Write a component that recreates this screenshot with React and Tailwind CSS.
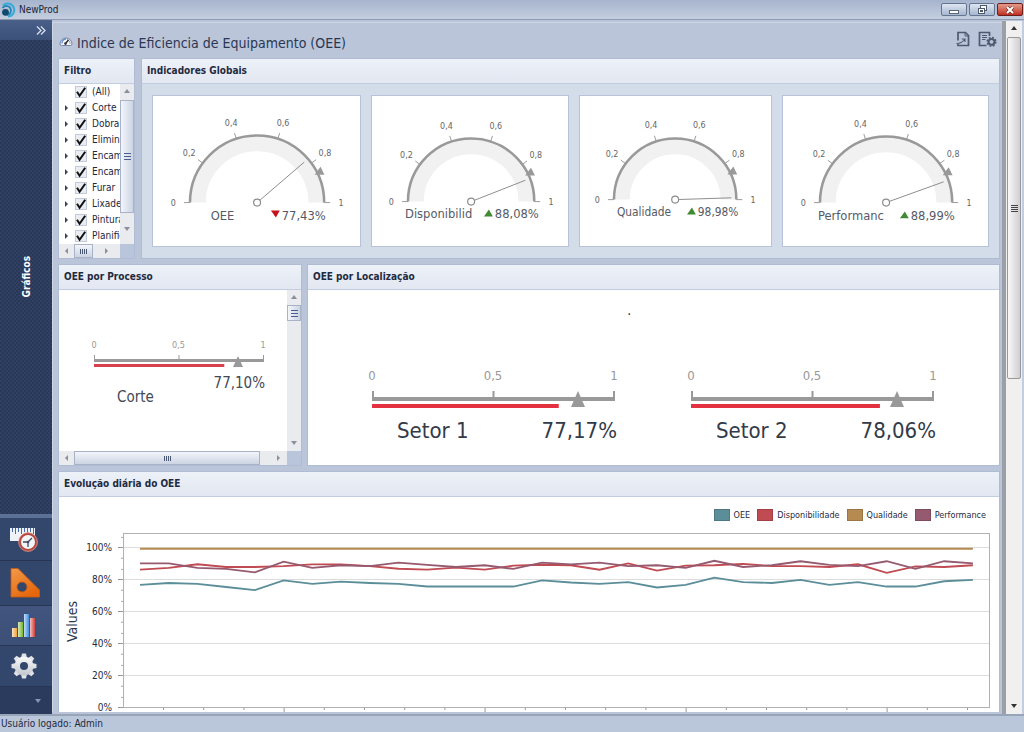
import React from "react";

const FONT = "font-['DejaVu_Sans_Condensed','Noto_Sans',sans-serif]";

const filters = ["Corte", "Dobra", "Elimina", "Encam", "Encam", "Furar", "Lixade", "Pintura", "Planific"];

const gauges = [
    { name: "OEE", label: "OEE", value: 77.43, down: true, w: 209, cx: 105, cy: 108, r: 68, nameX: 58, textY: 126, size: 13 },
    { name: "Disponibilidade", label: "Disponibilid", value: 88.08, w: 198, cx: 100, cy: 107, r: 64, nameX: 33, textY: 124, size: 13 },
    { name: "Qualidade", label: "Qualidade", value: 98.98, w: 192, cx: 96, cy: 105, r: 62, nameX: 37, textY: 122, size: 12 },
    { name: "Performance", label: "Performanc", value: 88.99, w: 207, cx: 104, cy: 108, r: 67, nameX: 35, textY: 126, size: 13 },
];

const sectors = [
    { name: "Setor 1", value: 77.17 },
    { name: "Setor 2", value: 78.06 },
];

const series = [
    {
        name: "OEE",
        color: "#5b8e99",
        data: [76.3, 77.5, 76.9, 75, 73.1, 79.1, 76.9, 78.4, 77.5, 76.9, 75.3, 75.3, 75.3, 75.3, 79.1, 77.8, 76.9, 78.1, 74.7, 76.3, 80.8, 78.1, 77.5, 79.4, 76.3, 78.1, 75.3, 75.3, 78.6, 79.4],
    },
    {
        name: "Disponibilidade",
        color: "#c04b52",
        data: [85.8, 86.9, 89.2, 87.5, 87.5, 88.1, 89.2, 89.2, 88.1, 86.4, 85.8, 87.1, 85.8, 88.3, 88.9, 88.6, 85.8, 89.8, 85.2, 88.3, 88.6, 89.4, 88.1, 88.1, 87.5, 89.2, 83.8, 87.9, 87.5, 88.6],
    },
    {
        name: "Qualidade",
        color: "#b58b51",
        data: Array(30).fill(98.9),
    },
    {
        name: "Performance",
        color: "#955a6f",
        data: [89.8, 89.8, 86.9, 86.3, 84.2, 90.8, 86.9, 88.6, 88.1, 90.2, 88.8, 87.5, 88.6, 86.3, 90.2, 89.2, 90.2, 88.1, 88.6, 86.9, 91.4, 87.5, 88.6, 91.1, 88.8, 88.1, 91.1, 86.4, 91.1, 89.8],
    },
];

const formatPercent = (value) => value.toFixed(2).replace(".", ",") + "%";

const Arrow = ({ dir, className = "text-[#8a8f98]" }) => {
    const points = {
        up: "0,4 3,0 6,4",
        down: "0,1 6,1 3,5",
        left: "4,0 4,6 1,3",
        right: "1,0 1,6 4,3",
    };
    return (
        <svg width="6" height="6" viewBox="0 0 6 6" className={className}>
            <polygon points={points[dir]} fill="currentColor" />
        </svg>
    );
};

const Panel = ({ title, className = "", children }) => (
    <section className={`flex min-w-0 flex-col border border-[#b0bcd3] bg-white ${className}`}>
        <h2 className="h-[25px] shrink-0 border-b border-[#c3cde0] bg-linear-to-b from-[#edf1f8] to-[#e2e7f1] px-[5px] text-[10px] leading-6 font-bold whitespace-nowrap text-[#1f2a40]">
            {title}
        </h2>
        {children}
    </section>
);

const ScrollButton = ({ dir, className }) => (
    <button type="button" aria-label={`Rolar ${dir}`} className={`flex shrink-0 items-center justify-center ${className}`}>
        <Arrow dir={dir} />
    </button>
);

const HThumb = ({ className }) => (
    <div className={`flex items-center justify-center gap-px border border-[#a9b3c7] bg-linear-to-b from-[#f3f5fa] to-[#ccd4e3] ${className}`}>
        <span className="h-[5px] w-px bg-[#4b5872]" />
        <span className="h-[5px] w-px bg-[#4b5872]" />
        <span className="h-[5px] w-px bg-[#4b5872]" />
        <span className="h-[5px] w-px bg-[#4b5872]" />
    </div>
);

const VThumb = ({ className }) => (
    <div className={`flex flex-col items-center justify-center gap-[2px] border border-[#a9b3c7] bg-linear-to-r from-[#f3f5fa] to-[#ccd4e3] ${className}`}>
        <span className="h-px w-[7px] bg-[#4b5e94]" />
        <span className="h-px w-[7px] bg-[#4b5e94]" />
        <span className="h-px w-[7px] bg-[#4b5e94]" />
    </div>
);

const TreeItem = ({ label, expandable = true }) => (
    <li className="flex h-4 items-center whitespace-nowrap">
        <span className="flex w-4 shrink-0 justify-center">
            {expandable && (
                <button type="button" aria-label={`Expandir ${label}`} className="flex">
                    <Arrow dir="right" className="text-[#3c4456]" />
                </button>
            )}
        </span>
        <label className="flex items-center gap-[5px] text-[10px] leading-4 text-[#1e2740]">
            <span className="grid shrink-0">
                <input
                    type="checkbox"
                    defaultChecked
                    className="peer col-start-1 row-start-1 size-3 appearance-none border border-[#c3cad6] bg-[#e9edf3]"
                />
                <svg viewBox="0 0 12 12" className="pointer-events-none invisible col-start-1 row-start-1 size-3 peer-checked:visible">
                    <path d="M2 5.8 L4.6 9.8 L10.2 1.8" fill="none" stroke="#111" strokeWidth="2" />
                </svg>
            </span>
            {label}
        </label>
    </li>
);

const ArcGauge = ({ gauge }) => {
    const { w, cx, cy, r, value, size } = gauge;
    const at = (v, radius) => {
        const a = Math.PI * (1 - v);
        return [cx + radius * Math.cos(a), cy - radius * Math.sin(a)];
    };
    const [nx, ny] = at(value / 100, r - 5);
    const [mx, my] = at(0.85, r + 3);
    const [hx, hy] = at(value / 100, 4);
    const valueX = cx + Math.round(r * 0.37);

    return (
        <svg viewBox={`0 0 ${w} 152`} className="h-[150px] w-full" role="img" aria-label={`${gauge.name} ${formatPercent(value)}`}>
            <path
                d={`M${cx - r + 8} ${cy} A${r - 8} ${r - 8} 0 0 1 ${cx + r - 8} ${cy}`}
                fill="none"
                stroke="#f1f1f1"
                strokeWidth="16"
            />
            <path d={`M${cx - r} ${cy} A${r} ${r} 0 0 1 ${cx + r} ${cy}`} fill="none" stroke="#999" strokeWidth="2.6" />
            {[0, 0.2, 0.4, 0.6, 0.8, 1].map((v) => {
                const [x1, y1] = at(v, r);
                const [x2, y2] = at(v, r + 6);
                const [tx, ty] = at(v, r + 17);
                return (
                    <g key={v}>
                        <line x1={x1} y1={y1} x2={x2} y2={y2} stroke="#999" />
                        <text x={tx} y={ty + 3} textAnchor="middle" fontSize="9" fill="#666">
                            {String(v).replace(".", ",")}
                        </text>
                    </g>
                );
            })}
            <polygon points={`${mx - 5},${my + 4} ${mx + 5},${my + 4} ${mx + 1},${my - 4}`} fill="#999" />
            <line x1={hx} y1={hy} x2={nx} y2={ny} stroke="#8c8c8c" />
            <circle cx={cx} cy={cy} r="3.5" fill="#fff" stroke="#8c8c8c" strokeWidth="1.2" />
            <text x={gauge.nameX} y={gauge.textY} fontSize={size} fill="#555b66">
                {gauge.label}
            </text>
            {gauge.down ? (
                <polygon points={`${valueX - 11},${gauge.textY - 10} ${valueX - 2},${gauge.textY - 10} ${valueX - 6},${gauge.textY - 3}`} fill="#c5121b" />
            ) : (
                <polygon points={`${valueX - 11},${gauge.textY - 2} ${valueX - 2},${gauge.textY - 2} ${valueX - 6},${gauge.textY - 9}`} fill="#3f8a32" />
            )}
            <text x={valueX} y={gauge.textY} fontSize={size} fill="#555b66">
                {formatPercent(value)}
            </text>
        </svg>
    );
};

const SectorGauge = ({ name, value }) => (
    <svg viewBox="0 0 260 80" className="w-[260px] max-w-full" role="img" aria-label={`${name} ${formatPercent(value)}`}>
        {[0, 0.5, 1].map((v) => (
            <g key={v}>
                <text x={8 + v * 242} y="14" textAnchor="middle" fontSize="13" fill="#999">
                    {String(v).replace(".", ",")}
                </text>
                <rect x={8 + v * 241} y="25" width="2" height="7" fill="#999" />
            </g>
        ))}
        <rect x="8" y="31" width="243" height="4" fill="#999" />
        <rect x="8" y="38" width={value * 2.42} height="4" fill="#e4313f" />
        <polygon points="207,41 221,41 214,25" fill="#999" />
        <text x="33" y="72" fontSize="22" fill="#333a48">
            {name}
        </text>
        <text x="253" y="72" textAnchor="end" fontSize="22" fill="#333a48">
            {formatPercent(value)}
        </text>
    </svg>
);

const ProcessGauge = ({ name, value }) => (
    <svg viewBox="0 0 184 70" className="h-[70px] w-[184px]" role="img" aria-label={`${name} ${formatPercent(value)}`}>
        {[0, 0.5, 1].map((v) => (
            <g key={v}>
                <text x={7 + v * 169} y="9" textAnchor="middle" fontSize="9" fill="#999">
                    {String(v).replace(".", ",")}
                </text>
                <rect x={7 + v * 169} y="16" width="1" height="5" fill="#999" />
            </g>
        ))}
        <rect x="7" y="20" width="170" height="3" fill="#999" />
        <rect x="7" y="25" width={value * 1.69} height="3" fill="#d9404e" />
        <polygon points="146,28 156,28 151,17" fill="#999" />
        <text x="178" y="49" textAnchor="end" fontSize="15" fill="#444a55">
            {formatPercent(value)}
        </text>
        <text x="30" y="63" fontSize="15" fill="#444a55">
            {name}
        </text>
    </svg>
);

const DailyChart = () => {
    const toY = (v) => 175 - v * 1.6;
    const toX = (i) => 81 + i * 28.72;

    return (
        <svg viewBox="0 0 940 184" className="w-full shrink-0" role="img" aria-label="Evolução diária do OEE">
            <rect x="64.5" y="1.5" width="866" height="174" fill="#fff" stroke="#b1b1b1" />
            {[0, 20, 40, 60, 80, 100].map((v) => (
                <g key={v}>
                    {v > 0 && <line x1="65" x2="930" y1={toY(v) + 0.5} y2={toY(v) + 0.5} stroke="#dcdcdc" />}
                    <line x1="59" x2="64" y1={toY(v) + 0.5} y2={toY(v) + 0.5} stroke="#999" />
                    <text x="53" y={toY(v) + 4} textAnchor="end" fontSize="10" fill="#1f2a40">
                        {v}%
                    </text>
                </g>
            ))}
            {[6, 13, 26, 33, 46, 53, 66, 73, 86, 93, 106].map((v) => (
                <line key={v} x1="62" x2="64" y1={toY(v)} y2={toY(v)} stroke="#aaa" />
            ))}
            {Array.from({ length: 21 }, (_, i) => (
                <line key={i} x1={104.5 + i * 40.2} x2={104.5 + i * 40.2} y1="176" y2={i % 5 === 3 ? 180 : 178} stroke="#999" />
            ))}
            <text transform="translate(18 110) rotate(-90)" fontSize="14" fill="#2c3850">
                Values
            </text>
            {series.map((s) => (
                <polyline
                    key={s.name}
                    points={s.data.map((v, i) => `${toX(i)},${toY(v)}`).join(" ")}
                    fill="none"
                    stroke={s.color}
                    strokeWidth="1.8"
                />
            ))}
        </svg>
    );
};

/* Icons */
const LogoIcon = () => (
    <svg width="16" height="16" viewBox="0 0 16 16">
        <path d="M3 3.5 A6.5 6.5 0 1 1 8 14.5" fill="none" stroke="#3cabd6" strokeWidth="2.2" />
        <path d="M2.5 6 A4.6 4.6 0 1 1 7 13" fill="none" stroke="#1b86bb" strokeWidth="1.8" />
        <circle cx="5.5" cy="10.3" r="3.4" fill="#12486b" />
    </svg>
);

const SpeedIcon = () => (
    <svg width="14" height="14" viewBox="0 0 14 14">
        <path d="M1 10 A6 6 0 1 1 13 10 Q13 11.5 11.5 11.5 H2.5 Q1 11.5 1 10Z" fill="#f4f6fb" stroke="#7384a8" />
        <path d="M3 9.5 A4 4 0 0 1 7 5" fill="none" stroke="#5c8bd0" strokeWidth="1.3" />
        <path d="M8.5 5.5 A4 4 0 0 1 11 9.5" fill="none" stroke="#474f60" strokeDasharray="1 1" />
        <path d="M6 10 L9.5 6" stroke="#222" strokeWidth="1.3" />
        <circle cx="6.5" cy="9.6" r="1.3" fill="#333" />
    </svg>
);

const ExportIcon = () => (
    <svg width="14" height="16" viewBox="0 0 14 16" fill="none" stroke="#4d5a70" strokeWidth="1.7">
        <path d="M2 9.5 V1.5 H9.5 L12.5 4.5 V14.5 H2 V13" />
        <path d="M9 1.5 V5 H12.5" strokeWidth="1" />
        <path d="M0.5 12.5 C3 12.5 6 12 8.5 8.5 M5.8 8 H9 V11" strokeWidth="1.1" />
    </svg>
);

const ReportIcon = () => (
    <svg width="19" height="16" viewBox="0 0 19 16" fill="none" stroke="#4d5a70">
        <path d="M8.5 14.5 H1.5 V1.5 H11.5 V5" strokeWidth="1.7" />
        <path d="M4 4.5 H9 M4 6.5 H9 M4 8.5 H7.5" strokeWidth="1" />
        <circle cx="13.5" cy="10.8" r="2.9" strokeWidth="2" />
        <circle cx="13.5" cy="10.8" r="4.3" strokeWidth="1.5" strokeDasharray="1.9 1.477" />
    </svg>
);

const ClockIcon = () => (
    <svg width="30" height="28" viewBox="0 0 30 28">
        <rect x="1" y="3" width="25" height="13" fill="#eef3fa" />
        <path d="M3.5 3 V7 M6.5 3 V9 M9.5 3 V7 M12.5 3 V9 M15.5 3 V7 M18.5 3 V9 M21.5 3 V7 M24.5 3 V9" stroke="#456aa8" />
        <circle cx="19" cy="17" r="8.2" fill="#f2f5f8" stroke="#b8483f" strokeWidth="2.4" />
        <circle cx="19" cy="17" r="9.4" fill="none" stroke="#e9a79c" strokeWidth="0.7" />
        <path d="M19 17 L23 13 M19 17 V22 M19 17 H14" stroke="#3d4b63" strokeWidth="1.3" />
        <circle cx="19" cy="17" r="1.3" fill="#3d4b63" />
    </svg>
);

const SetSquareIcon = () => (
    <svg width="31" height="32" viewBox="0 0 31 32">
        <defs>
            <linearGradient id="square" x1="0" y1="0" x2="0.6" y2="1">
                <stop offset="0" stopColor="#f39a4a" />
                <stop offset="1" stopColor="#e5660c" />
            </linearGradient>
        </defs>
        <path
            d="M2 1.5 H9 L30.5 23 V30 H2Z M13 15 A5 5 0 1 0 13 25 A5 5 0 1 0 13 15Z"
            fill="url(#square)"
            fillRule="evenodd"
            stroke="#c95a10"
            strokeWidth="0.8"
        />
    </svg>
);

const BarsIcon = () => (
    <svg width="26" height="25" viewBox="0 0 26 25">
        <defs>
            <linearGradient id="shine" x1="0" x2="1">
                <stop offset="0" stopColor="#fff" stopOpacity="0.7" />
                <stop offset="1" stopColor="#fff" stopOpacity="0" />
            </linearGradient>
        </defs>
        <rect x="1" y="15" width="5" height="9" fill="#f0a03a" />
        <rect x="7" y="9" width="5" height="15" fill="#79b72c" />
        <rect x="13" y="1" width="5" height="23" fill="#3f8de0" />
        <rect x="19" y="5" width="5" height="19" fill="#d23c36" />
        <rect x="1" y="15" width="5" height="9" fill="url(#shine)" />
        <rect x="7" y="9" width="5" height="15" fill="url(#shine)" />
        <rect x="13" y="1" width="5" height="23" fill="url(#shine)" />
        <rect x="19" y="5" width="5" height="19" fill="url(#shine)" />
    </svg>
);

const GearIcon = () => (
    <svg width="26" height="26" viewBox="0 0 26 26">
        <defs>
            <linearGradient id="gear" x1="0" y1="0" x2="0" y2="1">
                <stop offset="0" stopColor="#fafafa" />
                <stop offset="1" stopColor="#c2c6cc" />
            </linearGradient>
        </defs>
        {[0, 45, 90, 135, 180, 225, 270, 315].map((deg) => (
            <path key={deg} d="M10 5 L11 0.5 H15 L16 5Z" fill="#dfe1e5" transform={`rotate(${deg} 13 13)`} />
        ))}
        <path d="M13 3.5 A9.5 9.5 0 1 0 13 22.5 A9.5 9.5 0 1 0 13 3.5Z M13 9 A4 4 0 1 1 13 17 A4 4 0 1 1 13 9Z" fill="url(#gear)" fillRule="evenodd" />
    </svg>
);

const navItems = [
    { label: "Apontamentos", icon: <ClockIcon />, className: "h-[43px] bg-[#33466b]" },
    { label: "Engenharia", icon: <SetSquareIcon />, className: "h-[45px] bg-[#33466b]" },
    { label: "Gráficos", icon: <BarsIcon />, className: "h-[40px] bg-linear-to-b from-[#41557e] to-[#3c4f77]" },
    { label: "Configurações", icon: <GearIcon />, className: "h-[41px] bg-[#33466b]" },
];

const App = () => {
    return (
        <div className={`flex h-screen flex-col overflow-hidden bg-[#bac5d9] text-[#1f2a40] ${FONT}`}>
            {/* Title bar */}
            <header className="flex h-5 shrink-0 items-center border-b border-[#8c99b0] bg-linear-to-b from-[#a6b4cd] to-[#c4cedf] pr-px">
                <LogoIcon />
                <span className="ml-[3px] flex-1 text-[10px] leading-4 text-[#1b2334]">NewProd</span>
                <div className="flex h-[13px] items-stretch gap-[2px]">
                    <button type="button" aria-label="Minimizar" className="flex w-[26px] items-center justify-center rounded-[2px] border border-[#65758f] bg-linear-to-b from-[#dde5f0] to-[#a6b7d0]">
                        <span className="mt-1 h-[4px] w-[10px] border border-[#5b6778] bg-white" />
                    </button>
                    <button type="button" aria-label="Restaurar" className="flex w-[26px] items-center justify-center rounded-[2px] border border-[#65758f] bg-linear-to-b from-[#dde5f0] to-[#a6b7d0]">
                        <svg width="11" height="10" viewBox="0 0 11 10" fill="#fff" stroke="#4f5a6c">
                            <rect x="3.5" y="0.5" width="6" height="5" />
                            <rect x="1.5" y="3.5" width="6" height="5" />
                            <rect x="3.5" y="5.5" width="2" height="1" />
                        </svg>
                    </button>
                    <button type="button" aria-label="Fechar" className="flex w-[26px] items-center justify-center rounded-[2px] border border-[#6b1f1c] bg-linear-to-b from-[#e39a8c] to-[#bf2a1d]">
                        <svg width="10" height="8" viewBox="0 0 10 8">
                            <path d="M2 1 L8 7 M8 1 L2 7" stroke="#6d2a26" strokeWidth="3.2" />
                            <path d="M2 1 L8 7 M8 1 L2 7" stroke="#fff" strokeWidth="2" />
                        </svg>
                    </button>
                </div>
            </header>

            <div className="flex min-h-0 flex-1">
                {/* Sidebar */}
                <nav className="flex w-[52px] shrink-0 flex-col bg-[#2b3b5e] text-white">
                    <button type="button" aria-label="Expandir menu" className="flex h-5 items-center justify-end bg-linear-to-b from-[#4a6089] to-[#3c5078] pr-[6px]">
                        <svg width="10" height="9" viewBox="0 0 10 9" fill="none" stroke="#dde5f2" strokeWidth="1.2">
                            <path d="M1 0.5 L5 4.5 L1 8.5 M5 0.5 L9 4.5 L5 8.5" />
                        </svg>
                    </button>
                    <div className="flex min-h-0 flex-1 items-center justify-center bg-[repeating-conic-gradient(#293857_0%_25%,#2f4064_0%_50%)] bg-[size:4px_4px]">
                        <span className="rotate-180 text-[10px] font-bold [writing-mode:vertical-rl]">Gráficos</span>
                    </div>
                    <div className="h-1 bg-[#5d7197]" />
                    {navItems.map((item) => (
                        <button
                            key={item.label}
                            type="button"
                            aria-label={item.label}
                            className={`flex items-center justify-center border-b border-[#283654] pr-1 ${item.className}`}
                        >
                            {item.icon}
                        </button>
                    ))}
                    <button type="button" aria-label="Mais" className="flex h-[27px] items-center justify-end bg-[#2b3b5e] pr-[11px]">
                        <Arrow dir="down" className="text-[#8595b5]" />
                    </button>
                </nav>

                {/* Dashboard */}
                <main className="mt-[2px] mb-[2px] flex min-w-0 flex-1 flex-col overflow-hidden border-t border-l border-[#cdd6e5] pr-[2px] pl-[5px]">
                    <div className="flex h-[35px] shrink-0 items-center gap-1 pr-[3px] pl-px">
                        <SpeedIcon />
                        <h1 className="flex-1 pt-1 text-[14px] leading-5 text-[#2a3753]">Indice de Eficiencia de Equipamento (OEE)</h1>
                        <button type="button" aria-label="Exportar" className="mr-1 mb-1">
                            <ExportIcon />
                        </button>
                        <button type="button" aria-label="Parâmetros" className="mb-1">
                            <ReportIcon />
                        </button>
                    </div>

                    <div className="flex flex-col gap-[5px]">
                        <div className="flex h-[201px] gap-[6px]">
                            <Panel title="Filtro" className="w-[77px] shrink-0">
                                <div className="flex min-h-0 flex-1">
                                    <ul className="min-w-0 flex-1 overflow-hidden">
                                        <TreeItem label="(All)" expandable={false} />
                                        {filters.map((f, i) => (
                                            <TreeItem key={i} label={f} />
                                        ))}
                                    </ul>
                                    <div className="flex w-[14px] shrink-0 flex-col bg-[#e9ebef]">
                                        <ScrollButton dir="up" className="h-4" />
                                        <VThumb className="h-[113px]" />
                                        <ScrollButton dir="down" className="flex-1" />
                                    </div>
                                </div>
                                <div className="flex h-[14px] shrink-0 bg-[#b9c5db]">
                                    <div className="flex flex-1 bg-[#e9ebef]">
                                        <ScrollButton dir="left" className="w-[15px]" />
                                        <HThumb className="w-[19px]" />
                                        <ScrollButton dir="right" className="flex-1" />
                                    </div>
                                    <div className="w-[14px]" />
                                </div>
                            </Panel>

                            <Panel title="Indicadores Globais" className="flex-1">
                                <div className="flex flex-1 gap-[10px] bg-[#d3dce9] px-[10px] py-[11px]">
                                    {gauges.map((g) => (
                                        <div key={g.name} className="min-w-0 border border-[#b8c3da] bg-white" style={{ flex: `${g.w} 1 0` }}>
                                            <ArcGauge gauge={g} />
                                        </div>
                                    ))}
                                </div>
                            </Panel>
                        </div>

                        <div className="flex h-[202px] gap-[5px]">
                            <Panel title="OEE por Processo" className="w-[244px] shrink-0">
                                <div className="flex min-h-0 flex-1">
                                    <div className="flex flex-1 items-start justify-center pt-[49px] pl-3">
                                        <ProcessGauge name="Corte" value={77.1} />
                                    </div>
                                    <div className="flex w-[14px] shrink-0 flex-col bg-[#e9ebef]">
                                        <ScrollButton dir="up" className="h-[15px]" />
                                        <VThumb className="h-4" />
                                        <ScrollButton dir="down" className="mt-auto h-4" />
                                    </div>
                                </div>
                                <div className="flex h-[14px] shrink-0 bg-[#b9c5db]">
                                    <div className="flex flex-1 bg-[#e9ebef]">
                                        <ScrollButton dir="left" className="w-[15px]" />
                                        <HThumb className="w-[186px]" />
                                        <ScrollButton dir="right" className="ml-auto w-4" />
                                    </div>
                                    <div className="w-[14px]" />
                                </div>
                            </Panel>

                            <Panel title="OEE por Localização" className="flex-1">
                                <p className="w-[93%] pt-3 text-center text-[14px] leading-4">.</p>
                                <div className="grid grid-cols-2 px-[27px] pt-12">
                                    {sectors.map((s) => (
                                        <div key={s.name} className="flex justify-center">
                                            <SectorGauge name={s.name} value={s.value} />
                                        </div>
                                    ))}
                                </div>
                            </Panel>
                        </div>

                        <Panel title="Evolução diária do OEE" className="shrink-0">
                            <ul className="flex items-center justify-end gap-[7px] pt-[10px] pr-[13px] pb-[9px]">
                                {series.map((s) => (
                                    <li key={s.name} className="flex items-center gap-1 text-[9px] leading-4">
                                        <span className="h-3 w-4 border border-black/15" style={{ backgroundColor: s.color }} />
                                        {s.name}
                                    </li>
                                ))}
                            </ul>
                            <DailyChart />
                        </Panel>
                    </div>
                </main>

                {/* Page scrollbar */}
                <div className="mt-px flex w-[22px] shrink-0 flex-col border-r-2 border-l-4 border-r-[#c3cde0] border-l-[#9a9fa8] bg-[#f0f0f0]">
                    <button type="button" aria-label="Rolar para cima" className="flex h-4 items-center justify-center">
                        <Arrow dir="up" className="text-[#333]" />
                    </button>
                    <div className="mx-px flex h-[342px] flex-col items-center justify-center gap-px rounded-[2px] border border-[#989898] bg-linear-to-r from-[#f8f8f8] to-[#cfcfd2]">
                        <span className="h-px w-[7px] bg-[#444]" />
                        <span className="h-px w-[7px] bg-[#444]" />
                        <span className="h-px w-[7px] bg-[#444]" />
                        <span className="h-px w-[7px] bg-[#444]" />
                    </div>
                    <button type="button" aria-label="Rolar para baixo" className="mt-auto flex h-4 items-center justify-center">
                        <Arrow dir="down" className="text-[#333]" />
                    </button>
                </div>
            </div>

            {/* Status bar */}
            <footer className="h-[18px] shrink-0 border-t-2 border-[#98a4b8] bg-[#bac6da] pl-px text-[10px] leading-4">
                Usuário logado: Admin
            </footer>
        </div>
    );
};

export default App;
